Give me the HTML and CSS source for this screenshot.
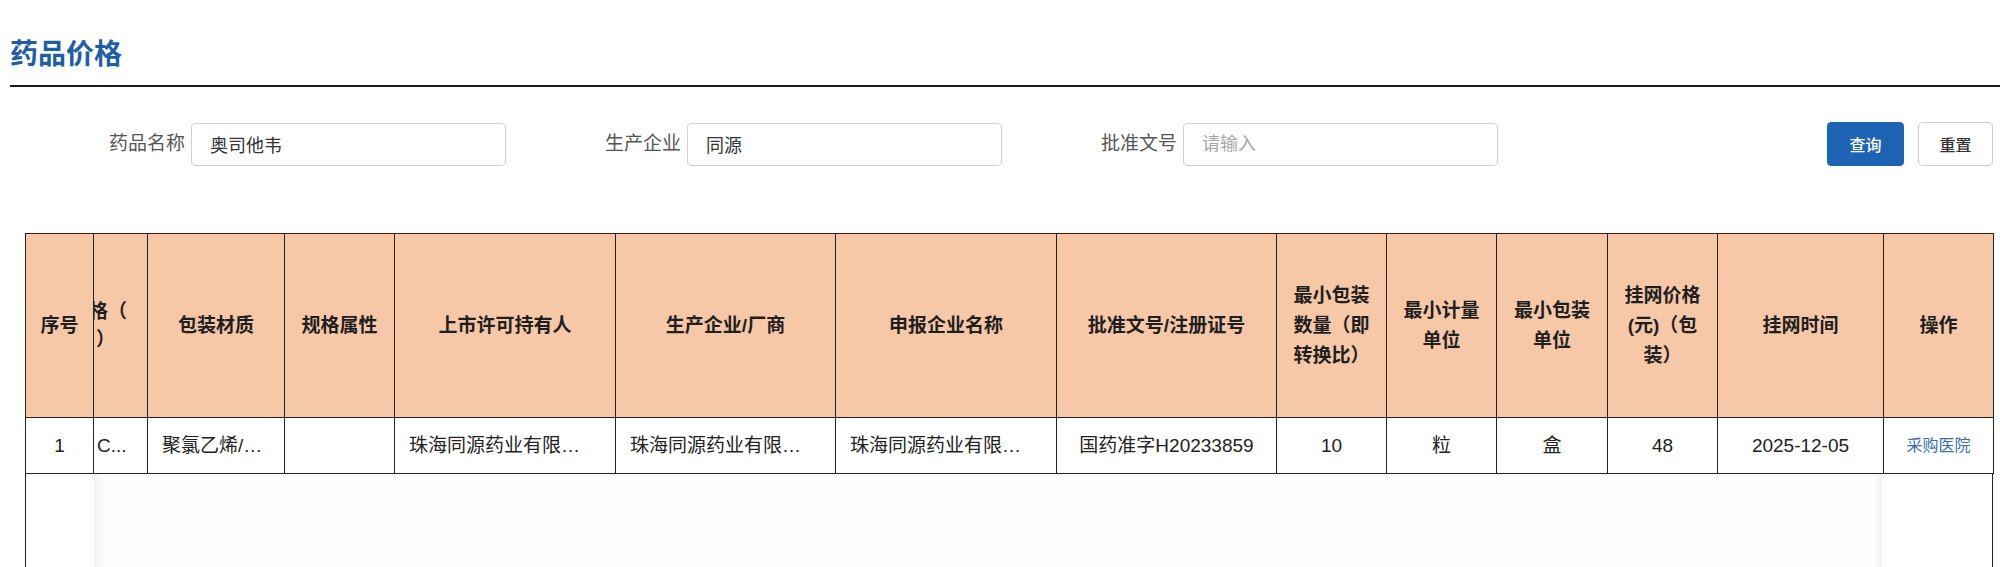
FILE: index.html
```html
<!DOCTYPE html>
<html lang="zh-CN">
<head>
<meta charset="utf-8">
<title>药品价格</title>
<link rel="stylesheet" href="styles.css">
</head>
<body>
<div class="page">
  <header class="head">
    <h1 class="title">药品价格</h1>
    <div class="rule"></div>
  </header>

  <form class="search">
    <div class="field">
      <label class="label">药品名称</label>
      <input class="input" type="text" value="奥司他韦">
    </div>
    <div class="field">
      <label class="label">生产企业</label>
      <input class="input" type="text" value="同源">
    </div>
    <div class="field">
      <label class="label">批准文号</label>
      <input class="input" type="text" placeholder="请输入">
    </div>
    <div class="actions">
      <button type="button" class="btn primary">查询</button>
      <button type="button" class="btn plain">重置</button>
    </div>
  </form>

  <div class="grid">
    <table class="tbl">
      <colgroup>
        <col style="width:68px">
        <col style="width:54px">
        <col style="width:137px">
        <col style="width:110px">
        <col style="width:221px">
        <col style="width:220px">
        <col style="width:221px">
        <col style="width:220px">
        <col style="width:110px">
        <col style="width:110px">
        <col style="width:111px">
        <col style="width:110px">
        <col style="width:166px">
        <col style="width:110px">
      </colgroup>
      <thead>
        <tr>
          <th>序号</th>
          <th class="clip"><span class="c1">格（</span><span class="c2">）</span></th>
          <th>包装材质</th>
          <th>规格属性</th>
          <th>上市许可持有人</th>
          <th>生产企业/厂商</th>
          <th>申报企业名称</th>
          <th>批准文号/注册证号</th>
          <th>最小包装数量（即转换比）</th>
          <th>最小计量单位</th>
          <th>最小包装单位</th>
          <th>挂网价格(元)（包装）</th>
          <th>挂网时间</th>
          <th>操作</th>
        </tr>
      </thead>
      <tbody>
        <tr>
          <td>1</td>
          <td class="cut">C...</td>
          <td class="ell short">聚氯乙烯/铝箔</td>
          <td></td>
          <td class="ell">珠海同源药业有限公司</td>
          <td class="ell">珠海同源药业有限公司</td>
          <td class="ell">珠海同源药业有限公司</td>
          <td>国药准字H20233859</td>
          <td>10</td>
          <td>粒</td>
          <td>盒</td>
          <td>48</td>
          <td>2025-12-05</td>
          <td><a class="link" href="#">采购医院</a></td>
        </tr>
      </tbody>
    </table>
    <div class="empty">
      <div class="fix-l"></div>
      <div class="shade-l"></div>
      <div class="mid"></div>
      <div class="shade-r"></div>
      <div class="fix-r"></div>
    </div>
  </div>
</div>
</body>
</html>
```

FILE: styles.css
```css
* { box-sizing: border-box; }

html, body {
  margin: 0;
  padding: 0;
  background: #ffffff;
}

body {
  font-family: "Liberation Sans", "Noto Sans CJK SC", sans-serif;
  color: #222222;
}

.page {
  padding-left: 10px;
}

.head {
  padding-top: 35px;
}

.title {
  margin: 0;
  font-size: 28px;
  line-height: 40px;
  font-weight: 700;
  color: #1d5ea6;
}

.rule {
  margin-top: 10px;
  height: 2px;
  background: #1c1c1c;
}

.search {
  display: flex;
  align-items: center;
  margin: 35px 0 0 0;
  padding-right: 7px;
  height: 44px;
}

.field {
  width: 496px;
  display: grid;
  grid-template-columns: 181px 315px;
  align-items: center;
}

.label {
  text-align: right;
  padding-right: 6px;
  font-size: 19px;
  line-height: 26px;
  color: #555555;
}

.input {
  height: 43px;
  width: 315px;
  border: 1px solid #d2d2d2;
  border-radius: 4px;
  padding: 0 18px;
  font-family: "Liberation Sans", "Noto Sans CJK SC", sans-serif;
  font-size: 18px;
  color: #333333;
  background: #ffffff;
  outline: none;
}

.input::placeholder {
  color: #a8a8a8;
}

.actions {
  margin-left: auto;
  display: flex;
  gap: 14px;
}

.btn {
  height: 44px;
  border-radius: 4px;
  font-family: "Liberation Sans", "Noto Sans CJK SC", sans-serif;
  font-size: 16px;
  font-weight: 500;
  padding: 0;
  cursor: pointer;
}

.btn.primary {
  width: 77px;
  background: #1e62b3;
  border: 1px solid #1e62b3;
  color: #ffffff;
}

.btn.plain {
  width: 75px;
  background: #ffffff;
  border: 1px solid #cfcfcf;
  color: #333333;
}

.grid {
  margin: 67px 0 0 15px;
  width: 1968px;
}

.tbl {
  border-collapse: collapse;
  table-layout: fixed;
  width: 1968px;
}

.tbl th,
.tbl td {
  border: 1px solid #222222;
  padding: 0 14px;
  text-align: center;
  vertical-align: middle;
}

.tbl th {
  height: 184px;
  background: #f6c8a7;
  font-size: 19px;
  line-height: 30px;
  font-weight: 700;
  color: #1f1f1f;
}

.tbl th.clip {
  padding: 0;
  text-align: left;
  overflow: hidden;
  white-space: nowrap;
}

.c1, .c2 {
  display: block;
  line-height: 28px;
}

.c1 { margin-left: -5px; }
.c2 { margin-left: 2px; }

.tbl td {
  height: 56px;
  font-size: 19px;
  line-height: 26px;
  color: #222222;
  background: #ffffff;
  white-space: nowrap;
  overflow: hidden;
}

.tbl td.ell {
  text-align: left;
  padding-right: 30px;
  text-overflow: ellipsis;
}

.tbl td.ell.short {
  padding-right: 18px;
}

.tbl td.cut {
  text-align: left;
  padding: 0 0 0 3px;
}

.link {
  font-size: 16px;
  color: #3a6ea8;
  text-decoration: none;
}

.empty {
  display: flex;
  height: 100px;
  border-left: 1px solid #222222;
  border-right: 1px solid #222222;
}

.fix-l {
  width: 68px;
  background: #ffffff;
}

.shade-l {
  width: 10px;
  background: linear-gradient(to right, #f2f2f2, #fdfdfd);
}

.mid {
  flex: 1;
  background: #fefefe;
}

.shade-r {
  width: 8px;
  background: linear-gradient(to left, #f2f2f2, #fdfdfd);
}

.fix-r {
  width: 110px;
  background: #ffffff;
}
```
